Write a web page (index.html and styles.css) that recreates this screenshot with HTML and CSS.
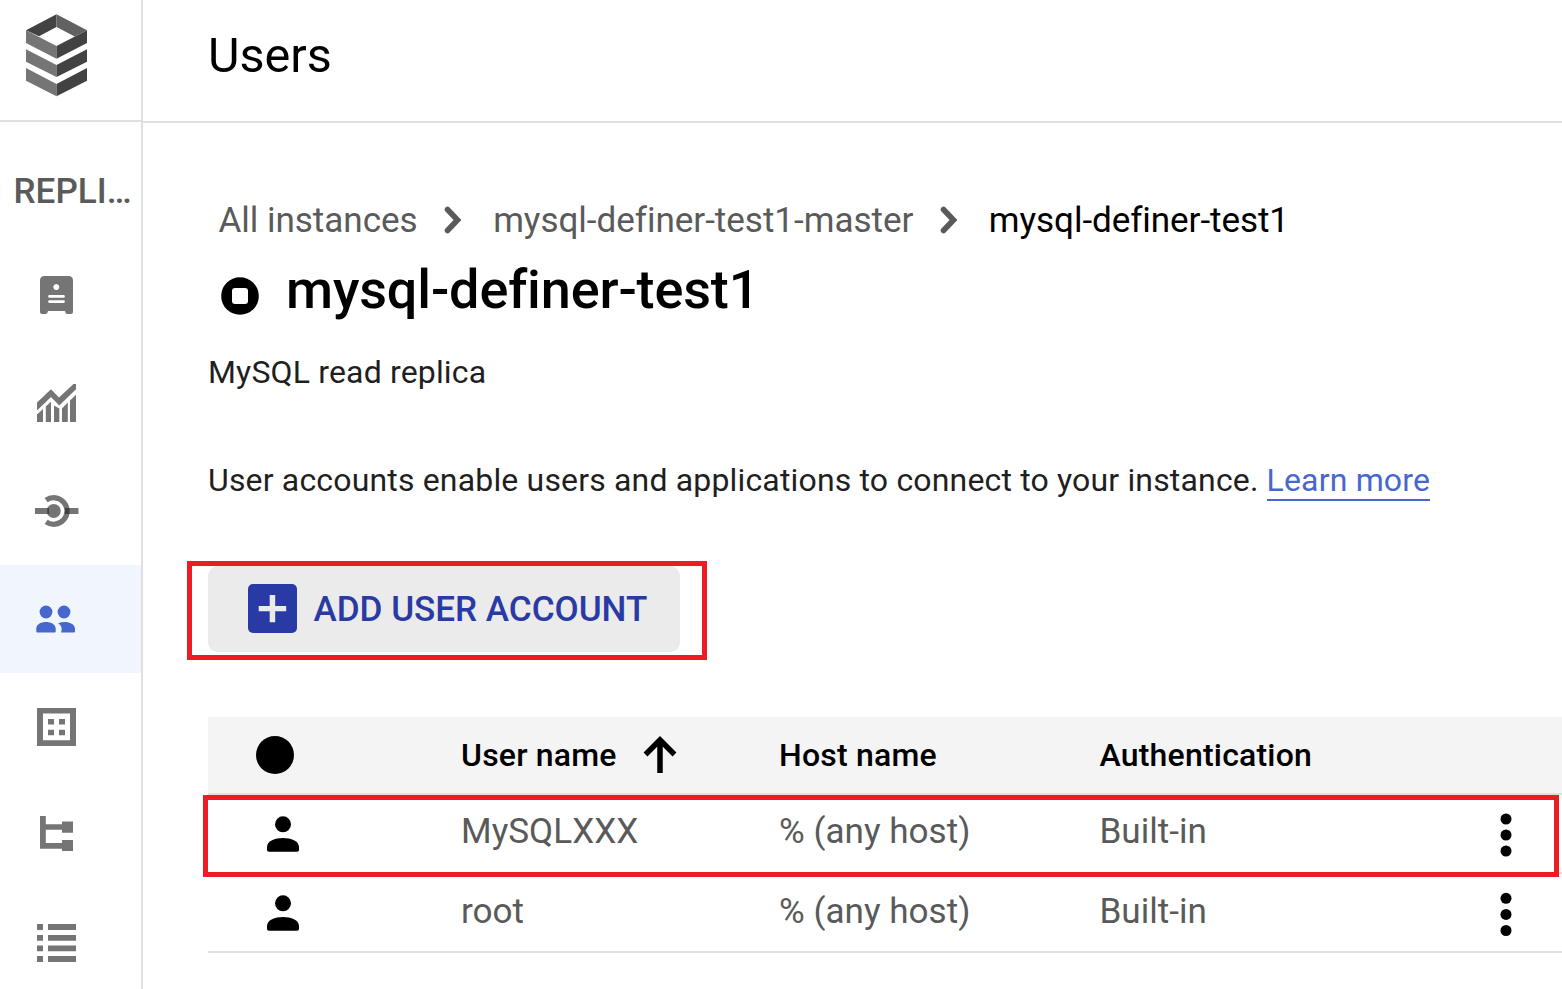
FILE: index.html
```html
<!DOCTYPE html>
<html lang="en">
<head>
<meta charset="utf-8">
<title>Users</title>
<link rel="stylesheet" href="styles.css">
</head>
<body>
<div class="app">
  <aside class="sidebar">
    <div class="brand">
      <svg class="brand-logo" viewBox="26 14 61 83">
        <path fill="#424242" d="M56.5 14.3V27L39 36.3 26 30.300z"/>
        <path fill="#616161" d="M56.5 14.3L87 30.3 74.7 36.6 56.5 27z"/>
        <path fill="#757575" d="M26 30.3L56.5 46V58.7L26 43zM26 49.3L56.5 65V77L26 61.7zM26 68L56.5 84V96.2L26 80.7z"/>
        <path fill="#424242" d="M87 30.3L56.5 46V58.7L87 43zM87 49.3L56.5 65V77L87 61.7zM87 68L56.5 84V96.2L87 80.7z"/>
      </svg>
    </div>
    <div class="nav-title">REPLI…</div>
    <nav class="nav">
      <a class="nav-item"><svg class="nav-icon" viewBox="32 271 48 48"><path fill-rule="evenodd" d="M44.5 276H68.5Q73 276 73 280.500V312Q73 314 71 314H67.500Q65.500 314 65 311H48Q47.500 314 45.500 314H42Q40 314 40 312V280.500Q40 276 44.500 276zM56.300 284a3 3 0 1 0 .01 0zM49.500 295a1.400 1.400 0 0 0 0 2.800H63.500a1.400 1.400 0 0 0 0-2.800zM49.500 300.200a1.400 1.400 0 0 0 0 2.800H63.500a1.400 1.400 0 0 0 0-2.800z"/></svg></a>
      <a class="nav-item"><svg class="nav-icon" viewBox="32 379 48 48"><path d="M37 402.500L51 389.300 59 397.500 73.500 384H76V389.300L59.300 405.500 51 397 37 410.500zM37 414.500L43 409V422H37zM45.800 406.500L51 401.800V422H45.800zM54 405.500L59.300 408.500V422H54zM62 408.500L67.800 402.500V422H62zM70 400.500L76 394.800V422H70z"/></svg></a>
      <a class="nav-item"><svg class="nav-icon" viewBox="32 487 48 48"><circle cx="53.700" cy="511" r="7"/><path fill="none" stroke="#757575" stroke-width="5.300" d="M46.100 500.100A13.300 13.300 0 1 1 46.100 521.900"/><path d="M35 508H48V514H35zM65 508H78.500V514H65z"/><path fill="#424242" d="M47.300 508H49V514H47.300zM65 508H69.500V514H65z"/></svg></a>
      <a class="nav-item nav-item-active"><svg class="nav-icon" viewBox="32 595 48 48"><circle cx="46" cy="612" r="6.400"/><circle cx="64" cy="612" r="6.400"/><path d="M36.300 631.500V628.500C36.500 624 41.500 622 46 622S55.500 624 55.700 628.500V631.500Q55.700 632.500 54.700 632.500H37.300Q36.300 632.500 36.300 631.500zM58.200 623.200C65 620.500 74.500 622.500 75 628.500V631.500Q75 632.500 74 632.500H61C62.500 628.500 61.500 625.500 58.200 623.200z"/></svg></a>
      <a class="nav-item"><svg class="nav-icon" viewBox="32 703 48 48"><path fill-rule="evenodd" d="M37 708H76V746H37zM43 713.500V740.200H70V713.500zM48 719h6v5.500h-6zM59 719h6v5.500h-6zM48 729.700h6v5.500h-6zM59 729.700h6v5.500h-6z"/></svg></a>
      <a class="nav-item"><svg class="nav-icon" viewBox="32 811 48 48"><path d="M40 816h5.800v8.300H62V821.500H73V832.700H62V829.700H45.800V843H62V840H73V851H62V848.700H40z"/></svg></a>
      <a class="nav-item"><svg class="nav-icon" viewBox="32 919 48 48"><path d="M37 924h6v6h-6zM48 924h28v6H48zM37 935h6v5.700h-6zM48 935h28v5.700H48zM37 945.500h6v5.700h-6zM48 945.500h28v5.700H48zM37 956h6v6h-6zM48 956h28v6H48z"/></svg></a>
    </nav>
  </aside>
  <main class="main">
    <header class="page-header"><h1 class="page-title">Users</h1></header>
    <section class="content">
      <div class="breadcrumb">
        <span class="crumb crumb-root">All instances</span>
        <svg class="chevron" viewBox="0 0 18 28"><path d="M3.500 3.500L13.500 14 3.500 24.500"/></svg>
        <span class="crumb crumb-parent">mysql-definer-test1-master</span>
        <svg class="chevron" viewBox="0 0 18 28"><path d="M3.500 3.500L13.500 14 3.500 24.500"/></svg>
        <span class="crumb crumb-current">mysql-definer-test1</span>
      </div>
      <div class="instance">
        <svg class="stop-icon" viewBox="0 0 38 38"><circle cx="19" cy="19" r="18.800"/><rect x="11" y="11" width="16" height="16" rx="3" fill="#fff"/></svg>
        <h2 class="instance-name">mysql-definer-test1</h2>
      </div>
      <p class="instance-type">MySQL read replica</p>
      <p class="description"><span class="description-text">User accounts enable users and applications to connect to your instance.</span><a class="link">Learn more</a></p>
      <div class="action">
        <button class="button">
          <svg class="add-icon" viewBox="0 0 49 49"><rect width="49" height="49" rx="5" fill="#2a3aa5"/><path fill="#ebebeb" d="M21.700 11h5.500v11h11v5.300h-11v11h-5.500v-11h-11V22h11z"/></svg>
          <span class="button-label">ADD USER ACCOUNT</span>
        </button>
        <div class="mark mark-action"></div>
      </div>
      <div class="table">
        <div class="row row-head">
          <div class="cell cell-icon"><span class="dot"></span></div>
          <div class="cell">User name<svg class="sort-icon" viewBox="0 0 34 38"><path d="M2.500 18.500L17 4 31.500 18.500M17 4V37"/></svg></div>
          <div class="cell">Host name</div>
          <div class="cell">Authentication</div>
          <div class="cell cell-menu"></div>
        </div>
        <div class="row">
          <div class="cell cell-icon"><svg class="person" viewBox="0 0 32 36"><circle cx="16" cy="8.300" r="8"/><path d="M0 34V31C0 25 8 22 16 22S32 25 32 31V34Q32 35.700 30 35.700H2Q0 35.700 0 34z"/></svg></div>
          <div class="cell">MySQLXXX</div>
          <div class="cell">% (any host)</div>
          <div class="cell">Built-in</div>
          <div class="cell cell-menu"><svg class="more" viewBox="0 0 12 44"><circle cx="6" cy="6" r="5.500"/><circle cx="6" cy="22" r="5.500"/><circle cx="6" cy="38" r="5.500"/></svg></div>
          <div class="mark mark-row"></div>
        </div>
        <div class="row row-last">
          <div class="cell cell-icon"><svg class="person" viewBox="0 0 32 36"><circle cx="16" cy="8.300" r="8"/><path d="M0 34V31C0 25 8 22 16 22S32 25 32 31V34Q32 35.700 30 35.700H2Q0 35.700 0 34z"/></svg></div>
          <div class="cell">root</div>
          <div class="cell">% (any host)</div>
          <div class="cell">Built-in</div>
          <div class="cell cell-menu"><svg class="more" viewBox="0 0 12 44"><circle cx="6" cy="6.300" r="5.500"/><circle cx="6" cy="22.400" r="5.500"/><circle cx="6" cy="38.500" r="5.500"/></svg></div>
        </div>
      </div>
    </section>
  </main>
</div>
</body>
</html>
```
FILE: styles.css
```css
* { box-sizing: border-box; }
body { margin: 0; background: #fff; color: #000; font-family: Roboto, "Liberation Sans", sans-serif; font-size: 35.1px; }
h1, h2, p { margin: 0; }
svg { display: block; flex: none; }
.app { display: flex; height: 989px; overflow: hidden; }

.sidebar { flex: none; width: 143px; height: 1000px; border-right: 2px solid #e0e0e0; }
.brand { height: 122px; padding: 14px 0 0 26px; border-bottom: 2px solid #e0e0e0; }
.brand-logo { width: 61px; height: 83px; }
.nav-title { height: 119px; padding: 0 0 0 13.5px; line-height: 139px; font-weight: 500; color: #5a5a5a; white-space: nowrap; }
.nav-item { display: flex; align-items: center; height: 108px; padding-left: 32px; }
.nav-item-active { background: #f0f5fe; }
.nav-icon { width: 48px; height: 48px; fill: #757575; }
.nav-item-active .nav-icon { fill: #4767cf; }

.main { flex: 1; min-width: 0; }
.page-header { height: 123px; padding-left: 65px; border-bottom: 2px solid #e0e0e0; }
.page-title { line-height: 112px; font-size: 48.6px; font-weight: 400; }
.content { padding: 72px 0 0 65px; white-space: nowrap; }

.breadcrumb { display: flex; align-items: center; height: 50px; padding-left: 10.5px; line-height: 50px; color: #5a5a5a; letter-spacing: -.04px; }
.chevron { width: 18px; height: 28px; margin: 0 31px 0 26.5px; fill: none; stroke: #5a5a5a; stroke-width: 5.6; stroke-linecap: round; }
.crumb-current { color: #000; letter-spacing: -.08px; }

.instance { display: flex; align-items: flex-start; height: 90px; padding-left: 13px; }
.stop-icon { width: 38px; height: 38px; margin-top: 32px; }
.instance-name { margin-left: 27px; line-height: 90px; font-size: 54px; font-weight: 500; letter-spacing: -.14px; }
.instance-type { height: 74px; line-height: 74px; font-size: 32px; letter-spacing: .16px; color: #1f1f1f; }
.description { display: flex; height: 144px; padding-top: 52px; font-size: 32px; line-height: 38px; letter-spacing: .165px; color: #1f1f1f; }
.link { height: 40px; margin-left: 8px; border-bottom: 2px solid #4767cf; color: #4767cf; }

.action { position: relative; width: 472px; margin-top: 13px; }
.button { display: flex; align-items: center; width: 472px; height: 86px; padding: 0 0 1px 40px; border: 0; border-radius: 10px; background: #ebebeb; color: #2a3aa5; font: 500 35.1px Roboto, sans-serif; letter-spacing: -.03px; }
.add-icon { width: 49px; height: 49px; margin-right: 16.5px; }
.mark { position: absolute; border: 5px solid #ed1c24; pointer-events: none; }
.mark-action { left: -21px; top: -5px; width: 520px; height: 99px; }

.table { margin-top: 65px; }
.row { position: relative; display: grid; grid-template-columns: 253px 318px 320.5px 390px 1fr; height: 79px; border-bottom: 2px solid #e0e0e0; line-height: 72px; color: #5a5a5a; letter-spacing: .01px; }
.row-last { line-height: 74px; }
.row-head { height: 78px; background: #f4f4f4; line-height: 77px; font-size: 32px; font-weight: 500; color: #000; letter-spacing: .2px; }
.cell { display: flex; min-width: 0; }
.cell-icon { padding: 21px 0 0 59px; }
.row-head .cell-icon { padding: 18.5px 0 0 48px; }
.dot { width: 38px; height: 38px; border-radius: 50%; background: #000; }
.sort-icon { width: 34px; height: 38px; margin: 19px 0 0 26.5px; fill: none; stroke: #000; stroke-width: 5.5; }
.person { width: 32px; height: 36px; fill: #000; }
.cell-menu { padding: 18px 0 0 10.500px; }
.more { width: 12px; height: 44px; fill: #000; }
.mark-row { left: -5px; top: 0; width: 1356px; height: 82px; z-index: 1; }
```
